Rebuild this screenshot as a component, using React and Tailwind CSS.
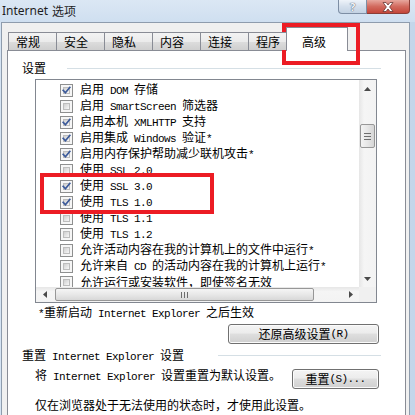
import React from "react";

const MONO = "font-['Liberation_Mono',monospace] text-[11px] tracking-[-0.6px]";

function T({ s }) {
  const parts = s.split(/([\x20-\x7E]+)/).filter(Boolean);
  return parts.map((p, i) =>
    /^[\x20-\x7E]+$/.test(p) ? (
      <span key={i} className={MONO}>{p}</span>
    ) : (
      <span key={i}>{p}</span>
    )
  );
}

function Check({ on }) {
  return (
    <div className="relative w-[13px] h-[13px] shrink-0 border border-[#8e8f8f] bg-[#f6f6f6] p-[2px]">
      <div className="w-full h-full border border-[#bdbdbd] bg-[linear-gradient(135deg,#cfcfcf,#f7f7f7)]" />
      {on && (
        <svg className="absolute left-0 top-0" width="11" height="11" viewBox="0 0 11 11">
          <path d="M2.2 5.4 L4.4 7.8 L8.8 2.4" stroke="#3b5a9a" strokeWidth="1.7" fill="none" strokeLinecap="square" />
        </svg>
      )}
    </div>
  );
}

function Arrow({ dir }) {
  const d = {
    up: "M0 4 L3.5 0 L7 4 Z",
    down: "M0 0 L7 0 L3.5 4 Z",
    left: "M4 0 L4 7 L0 3.5 Z",
    right: "M0 0 L4 3.5 L0 7 Z",
  }[dir];
  const w = dir === "up" || dir === "down" ? 7 : 4;
  const h = dir === "up" || dir === "down" ? 4 : 7;
  return (
    <svg width={w} height={h} viewBox={`0 0 ${w} ${h}`}>
      <path d={d} fill="#4a4a4a" />
    </svg>
  );
}

const rows = [
  [true, "启用 DOM 存储"],
  [false, "启用 SmartScreen 筛选器"],
  [true, "启用本机 XMLHTTP 支持"],
  [true, "启用集成 Windows 验证*"],
  [true, "启用内存保护帮助减少联机攻击*"],
  [false, "使用 SSL 2.0"],
  [true, "使用 SSL 3.0"],
  [true, "使用 TLS 1.0"],
  [false, "使用 TLS 1.1"],
  [false, "使用 TLS 1.2"],
  [false, "允许活动内容在我的计算机上的文件中运行*"],
  [false, "允许来自 CD 的活动内容在我的计算机上运行*"],
  [false, "允许运行或安装软件，即使签名无效"],
];

const tabs = [
  ["常规", "w-[48px]"],
  ["安全", "w-[48px]"],
  ["隐私", "w-[48px]"],
  ["内容", "w-[48px]"],
  ["连接", "w-[48px]"],
  ["程序", "w-[38px]"],
];

const BTN =
  "h-[20px] border border-[#707070] rounded-[3px] bg-[linear-gradient(#f4f4f4_0%,#ececec_45%,#dedede_50%,#d0d0d0_100%)] shadow-[inset_0_0_0_1px_#fbfbfb] flex items-center justify-center whitespace-pre text-[12px] leading-[16px]";

export default function App() {
  return (
    <div className="relative w-[415px] h-[415px] overflow-hidden bg-[linear-gradient(90deg,#d6e4f3,#cfdff0_60%,#c4d6ea)] flex flex-col font-['Noto_Sans_CJK_SC',sans-serif] text-black text-[12px]">
      {/* title bar */}
      <div className="h-[22px] shrink-0 flex items-start pl-[2px] pr-[5px] bg-[linear-gradient(180deg,#dbe7f4,#cfdff0)]">
        <div className="mt-[3px] flex items-center text-[12px] leading-[16px] text-[#1e1e1e]">
          <span className="font-['Noto_Sans',sans-serif]">Internet</span>
          <span className="ml-[4px]">选项</span>
        </div>
        <div className="ml-auto flex">
          <div className="w-[29px] h-[14px] border border-t-0 border-[#7d8ea4] rounded-bl-[4px] bg-[linear-gradient(180deg,#eef3f9,#d4dfec_50%,#c3d2e3)] flex items-center justify-center">
            <span className="font-['Noto_Sans',sans-serif] text-[11px] leading-[12px] font-bold text-[#f4f6f9] [text-shadow:0_0_1px_#4b5b70,0_0_1px_#4b5b70]">?</span>
          </div>
          <div className="w-[43px] h-[14px] border border-t-0 border-l-0 border-[#8b3d36] rounded-br-[4px] bg-[linear-gradient(180deg,#e7a79e,#d26a5e_50%,#c4463a)] flex items-center justify-center">
            <svg width="12" height="10" viewBox="0 0 12 10">
              <path d="M1 0.5 H4 L6 3 L8 0.5 H11 L7.6 5 L11 9.5 H8 L6 7 L4 9.5 H1 L4.4 5 Z" fill="#ffffff" stroke="#5a2a26" strokeWidth="0.7" />
            </svg>
          </div>
        </div>
      </div>

      {/* client area */}
      <div className="flex-1 flex flex-col ml-[1px] mr-[5px] border-l border-t border-r border-[#8e9cad] bg-[#f0f0f0]">
        {/* tabs */}
        <div className="relative z-10 mt-[4px] h-[23px] shrink-0 flex items-end pl-[6px]">
          {tabs.map(([label, w]) => (
            <div
              key={label}
              className={`${w} h-[18px] border-l border-t border-[#898c95] bg-[linear-gradient(180deg,#f3f3f3,#ebebeb_50%,#dddddd_50%,#cfcfcf)] pl-[7px] pt-[1px] leading-[16px]`}
            >
              {label}
            </div>
          ))}
          <div className="w-[62px] h-[24px] -mb-px border-l border-t border-r border-[#898c95] bg-white pl-[15px] pt-[6px] leading-[16px]">
            高级
          </div>
        </div>

        {/* panel */}
        <div className="flex-1 flex flex-col ml-[5px] mr-[3px] border-l border-t border-r border-[#898c95] bg-white">
          <div className="mt-[9px] flex items-center h-[16px]">
            <span className="ml-[14px] leading-[16px]">设置</span>
            <div className="ml-[21px] mr-[24px] flex-1 h-px bg-[#d5dfe5]" />
          </div>

          {/* listbox */}
          <div className="mt-[3px] ml-[27px] w-[342px] h-[224px] border border-[#828790] flex flex-col">
            <div className="flex h-[207px]">
              <div className="w-[323px] h-[207px] overflow-hidden pt-[2px] whitespace-pre">
                {rows.map(([on, text], i) => (
                  <div key={i} className="h-[16px] flex items-center">
                    <div className="ml-[24px]">
                      <Check on={on} />
                    </div>
                    <div className="ml-[7px] leading-[16px]">
                      <T s={text} />
                    </div>
                  </div>
                ))}
              </div>
              <div className="w-[17px] h-[207px] flex flex-col bg-[linear-gradient(90deg,#e6e6e6,#f5f5f5_30%,#f3f3f3)]">
                <div className="h-[17px] flex items-center justify-center">
                  <Arrow dir="up" />
                </div>
                <div className="mt-[27px] mx-[1px] h-[24px] rounded-[2px] border border-[#979797] bg-[linear-gradient(90deg,#f3f3f3,#e6e6e6_50%,#d6d6d6)] flex flex-col items-center justify-center gap-[2px]">
                  <div className="w-[7px] h-px bg-[#6e6e6e]" />
                  <div className="w-[7px] h-px bg-[#6e6e6e]" />
                  <div className="w-[7px] h-px bg-[#6e6e6e]" />
                </div>
                <div className="flex-1" />
                <div className="h-[17px] flex items-center justify-center">
                  <Arrow dir="down" />
                </div>
              </div>
            </div>
            <div className="flex h-[15px]">
              <div className="w-[323px] h-[15px] flex items-center bg-[linear-gradient(180deg,#e6e6e6,#f5f5f5_30%,#f3f3f3)]">
                <div className="w-[17px] flex items-center justify-center">
                  <Arrow dir="left" />
                </div>
                <div className="ml-[2px] w-[259px] h-[13px] rounded-[2px] border border-[#979797] bg-[linear-gradient(180deg,#f5f5f5,#e8e8e8_50%,#d8d8d8)] flex items-center justify-center gap-[2px]">
                  <div className="w-px h-[6px] bg-[#6e6e6e]" />
                  <div className="w-px h-[6px] bg-[#6e6e6e]" />
                  <div className="w-px h-[6px] bg-[#6e6e6e]" />
                </div>
                <div className="flex-1" />
                <div className="w-[17px] flex items-center justify-center">
                  <Arrow dir="right" />
                </div>
              </div>
              <div className="w-[17px] h-[15px] bg-[#f0f0f0]" />
            </div>
          </div>

          <div className="mt-[1px] ml-[30px] leading-[16px] whitespace-pre">
            <T s="*重新启动 Internet Explorer 之后生效" />
          </div>

          <div className="mt-[2px] ml-[220px] w-[151px]">
            <div className={BTN}>
              <T s="还原高级设置(R)" />
            </div>
          </div>

          <div className="mt-[4px] flex items-center h-[16px]">
            <span className="ml-[14px] leading-[16px] whitespace-pre">
              <T s="重置 Internet Explorer 设置" />
            </span>
            <div className="ml-[34px] mr-[24px] flex-1 h-px bg-[#d5dfe5] -mt-[2px]" />
          </div>

          <div className="mt-[3px] flex items-start">
            <span className="ml-[27px] leading-[16px] whitespace-pre">
              <T s="将 Internet Explorer 设置重置为默认设置。" />
            </span>
            <div className="ml-auto mr-[26px] mt-[2px] w-[87px]">
              <div className={BTN}>
                <T s="重置(S)..." />
              </div>
            </div>
          </div>

          <div className="mt-[8px] ml-[27px] leading-[16px]">仅在浏览器处于无法使用的状态时，才使用此设置。</div>
        </div>
      </div>

      {/* red highlight boxes */}
      <div className="absolute left-[282px] top-[23px] w-[78px] h-[42px] border-[4px] border-[#ec1c24]" />
      <div className="absolute left-[40px] top-[173px] w-[174px] h-[41px] border-[4px] border-[#ec1c24]" />
    </div>
  );
}
